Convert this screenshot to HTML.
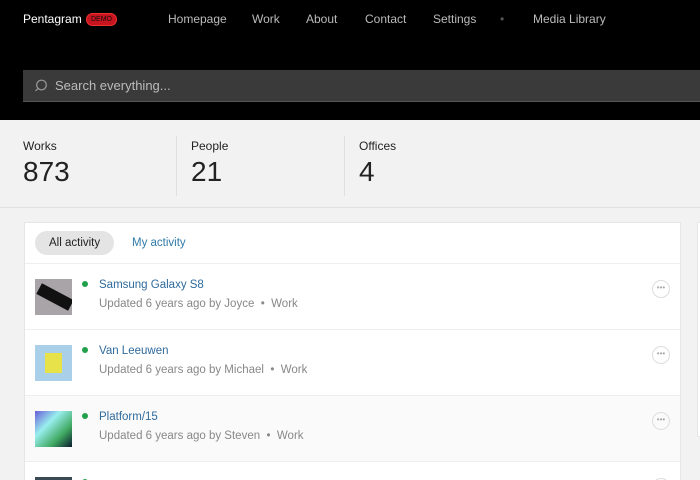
<!DOCTYPE html>
<html><head><style>
*{margin:0;padding:0;box-sizing:border-box}
html,body{width:700px;height:480px;overflow:hidden}
body{background:#f2f2f2;font-family:"Liberation Sans",sans-serif;position:relative}
.hdr{position:absolute;left:0;top:0;width:700px;height:120px;background:#000}
.t{position:absolute;white-space:nowrap}
.nav{color:#bbb;font-size:12px;top:12px}
.search{position:absolute;left:23px;top:70px;width:677px;height:32px;background:#3a3a3a;border-bottom:1px solid #555}
.stats{position:absolute;left:0;top:120px;width:700px;height:88px;border-bottom:1px solid #e2e2e2}
.lab{font-size:12px;color:#222;top:19px}
.num{font-size:28px;color:#222;top:36px}
.vl{position:absolute;top:16px;width:1px;height:60px;background:#e0e0e0}
.card{position:absolute;left:24px;top:222px;width:657px;height:258px;background:#fff;border:1px solid #e6e6e6;border-bottom:none;overflow:hidden}
.row{position:absolute;left:0;width:655px;height:66px;border-top:1px solid #eee}
.th{position:absolute;left:10px;top:15px;width:37px;height:36px;overflow:hidden}
.dot{position:absolute;left:57px;top:17px;width:6px;height:6px;border-radius:50%;background:#22a04b}
.ti{position:absolute;left:74px;top:15px;font-size:11.5px;color:#2f6a9c}
.su{position:absolute;left:74px;top:34px;font-size:11.5px;color:#888}
.more{position:absolute;left:627px;top:16px;width:18px;height:18px;border:1px solid #ddd;border-radius:50%;color:#aaa;font-size:8px;text-align:center;line-height:14px}
</style></head><body>
<div class="hdr">
<div class="t" style="left:23px;top:12px;color:#fff;font-size:12px">Pentagram</div>
<div class="t" style="left:86px;top:13px;background:#c8141e;color:#111;font-size:7px;border-radius:7px;padding:2px 4px;border:1px solid #e33">DEMO</div>
<div class="t nav" style="left:168px">Homepage</div>
<div class="t nav" style="left:252px">Work</div>
<div class="t nav" style="left:306px">About</div>
<div class="t nav" style="left:365px">Contact</div>
<div class="t nav" style="left:433px">Settings</div>
<div class="t nav" style="left:500px;color:#555">•</div>
<div class="t nav" style="left:533px">Media Library</div>
<div class="search">
<svg style="position:absolute;left:11px;top:9px" width="14" height="14" viewBox="0 0 14 14"><circle cx="7.5" cy="6" r="4.8" fill="none" stroke="#999" stroke-width="1.2"/><path d="M4 9.5L1.5 12" stroke="#999" stroke-width="1.2"/></svg>
<div class="t" style="left:32px;top:8px;color:#bbb;font-size:13px">Search everything...</div>
</div></div>
<div class="stats">
<div class="t lab" style="left:23px">Works</div><div class="t num" style="left:23px">873</div>
<div class="vl" style="left:176px"></div>
<div class="t lab" style="left:191px">People</div><div class="t num" style="left:191px">21</div>
<div class="vl" style="left:344px"></div>
<div class="t lab" style="left:359px">Offices</div><div class="t num" style="left:359px">4</div>
</div>
<div style="position:absolute;left:697px;top:222px;width:3px;height:215px;background:#fff;border-left:1px solid #e6e6e6;border-top:1px solid #e6e6e6;border-bottom:1px solid #e6e6e6"></div>
<div class="card">
<div class="t" style="left:10px;top:8px;background:#e4e4e4;border-radius:13px;padding:6px 14px;font-size:11.5px;color:#222">All activity</div>
<div class="t" style="left:107px;top:14px;font-size:11.5px;color:#2f7aa8">My activity</div>
<div class="row" style="top:40px"><div class="th" style="background:#a9a4a8"><div style="position:absolute;left:2px;top:12px;width:36px;height:12px;background:#111;transform:rotate(28deg)"></div></div><div class="dot"></div><div class="ti">Samsung Galaxy S8</div><div class="su">Updated 6 years ago by Joyce &nbsp;•&nbsp; Work</div><div class="more">•••</div></div>
<div class="row" style="top:106px"><div class="th" style="background:#a9d0e8"><div style="position:absolute;left:10px;top:8px;width:17px;height:20px;background:#e8e24a"></div></div><div class="dot"></div><div class="ti">Van Leeuwen</div><div class="su">Updated 6 years ago by Michael &nbsp;•&nbsp; Work</div><div class="more">•••</div></div>
<div class="row" style="top:172px;background:#fafafa"><div class="th" style="background:linear-gradient(135deg,#6a5cd8,#9ee,#3fa860 70%,#0b1a30)"></div><div class="dot"></div><div class="ti">Platform/15</div><div class="su">Updated 6 years ago by Steven &nbsp;•&nbsp; Work</div><div class="more">•••</div></div>
<div class="row" style="top:238px"><div class="th" style="background:#3a4a55"></div><div class="dot"></div><div class="more">•••</div></div>
</div>
</body></html>
